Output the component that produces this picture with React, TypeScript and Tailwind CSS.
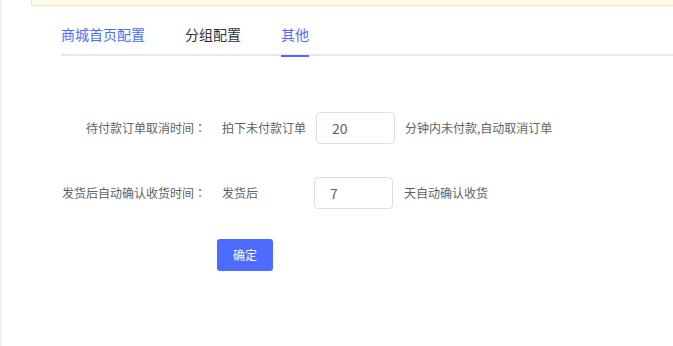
import React, { useState } from "react";

const tabs = ["商城首页配置", "分组配置", "其他"];

function Colon() {
  return <span style={{ fontFamily: '"Noto Sans CJK TC", sans-serif' }}>：</span>;
}

export default function App() {
  const [active, setActive] = useState(2);
  const [cancelMinutes, setCancelMinutes] = useState("20");
  const [confirmDays, setConfirmDays] = useState("7");

  return (
    <div
      className="flex h-[346px] w-full overflow-hidden bg-white text-[#606266]"
      style={{ fontFamily: '"Noto Sans CJK SC", "Noto Sans", sans-serif' }}
    >
      <div className="w-[2px] shrink-0 bg-[#f0f1f3]" />
      <div className="flex-1 pl-[29px]">
        {/* notice strip */}
        <div className="h-[6px] border-b border-l border-[#f5e3b5] bg-[#fffbeb]" />

        <div className="ml-[30px] mt-[8px]">
          {/* tabs */}
          <div className="flex h-[42px] border-b-2 border-[#e4e7ed]">
            {tabs.map((t, i) => (
              <div
                key={t}
                onClick={() => setActive(i)}
                className={
                  "relative flex h-[42px] cursor-pointer items-center text-[14px] " +
                  (i === 0 ? "pr-[20px] " : i === tabs.length - 1 ? "pl-[20px] " : "px-[20px] ") +
                  (i === active || i === 0 ? "text-[#4d6bfe]" : "text-[#303133]")
                }
              >
                <span className="relative pb-[2px]">
                  {t}
                  {i === active && (
                    <span className="absolute -bottom-[10px] left-0 right-0 h-[2px] bg-[#4d6bfe]" />
                  )}
                </span>
              </div>
            ))}
          </div>

          {/* form */}
          <div className="mt-[56px] text-[12px]">
            <div className="flex h-[32px] items-center">
              <label className="w-[145px] text-right">
                待付款订单取消时间<Colon />
              </label>
              <span className="ml-[16px] mr-[10px]">拍下未付款订单</span>
              <input
                value={cancelMinutes}
                onChange={(e) => setCancelMinutes(e.target.value)}
                className="h-[32px] w-[79px] rounded-[4px] border border-[#dcdfe6] px-[15px] text-[14px] text-[#606266] outline-none"
              />
              <span className="ml-[10px]">分钟内未付款,自动取消订单</span>
            </div>

            <div className="mt-[33px] flex h-[32px] items-center">
              <label className="w-[145px] text-right">
                发货后自动确认收货时间<Colon />
              </label>
              <span className="ml-[16px] w-[92px]">发货后</span>
              <input
                value={confirmDays}
                onChange={(e) => setConfirmDays(e.target.value)}
                className="h-[32px] w-[79px] rounded-[4px] border border-[#dcdfe6] px-[15px] text-[14px] text-[#606266] outline-none"
              />
              <span className="ml-[11px]">天自动确认收货</span>
            </div>

            <button className="ml-[156px] mt-[30px] h-[32px] w-[56px] rounded-[3px] bg-[#4d6bfe] text-[12px] text-white">
              确定
            </button>
          </div>
        </div>
      </div>
    </div>
  );
}
